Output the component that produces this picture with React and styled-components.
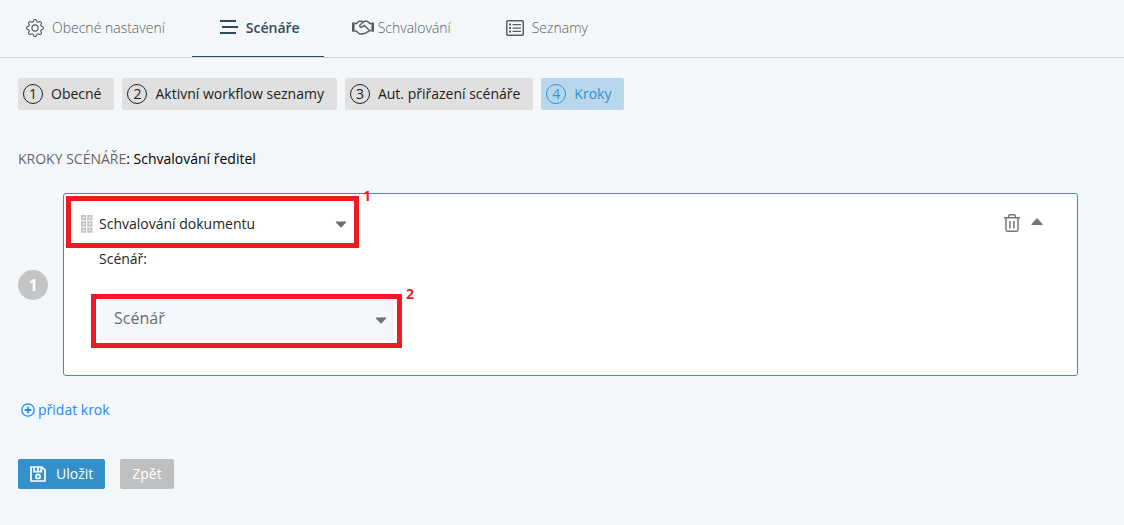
import React, { useState } from 'react';
import styled, { createGlobalStyle } from 'styled-components';
import { BsGear } from 'react-icons/bs';

const GlobalStyle = createGlobalStyle`
  *, *::before, *::after {
    box-sizing: border-box;
  }
  body {
    margin: 0;
    background: #f3f7fa;
    color: #212529;
    font-family: "Open Sans", "Noto Sans", sans-serif;
    font-size: 14px;
    line-height: 20px;
  }
  button, select {
    font: inherit;
  }
`;

// Top navigation
const Tabs = styled.nav`
  display: flex;
  border-bottom: 1px solid #ced4da;
`;

const Tab = styled.a`
  display: flex;
  align-items: center;
  gap: ${({ $gap }) => $gap || 8}px;
  height: 57px;
  padding: 0 ${({ $active }) => ($active ? 24 : 27)}px 0 28px;
  border-bottom: 1px solid ${({ $active }) => ($active ? '#2d4a5e' : 'transparent')};
  color: ${({ $active }) => ($active ? '#2d4a5e' : '#5c5c5c')};
  font-weight: ${({ $active }) => ($active ? 600 : 300)};
  text-decoration: none;
  white-space: nowrap;
  &:first-child {
    padding-left: 26px;
  }
  svg {
    flex: none;
  }
`;

const Content = styled.main`
  padding: 20px 46px 20px 18px;
`;

// Wizard steps
const Steps = styled.div`
  display: flex;
  gap: 8px;
`;

const Step = styled.button`
  display: flex;
  align-items: center;
  gap: 8px;
  height: 32px;
  padding: 0 13px 0 5px;
  border: none;
  border-radius: 2px;
  background: ${({ $active }) => ($active ? '#b9d7ec' : '#e0e0e0')};
  color: ${({ $active }) => ($active ? '#3490cb' : '#212121')};
  white-space: nowrap;
  cursor: pointer;
`;

const StepNumber = styled.span`
  width: 20px;
  height: 20px;
  border: 1px solid currentColor;
  border-radius: 50%;
  line-height: 18px;
  text-align: center;
`;

const Title = styled.h1`
  margin: 39px 0 24px;
  color: #000;
  font-size: 14px;
  font-weight: 500;
  line-height: 20px;
  span {
    color: #666;
    font-weight: 400;
  }
`;

// Scenario step
const StepRow = styled.section`
  display: flex;
  align-items: center;
  gap: 15px;
`;

const Badge = styled.span`
  flex: none;
  width: 30px;
  height: 30px;
  border-radius: 50%;
  background: #c4c4c4;
  color: #fff;
  font-size: 16px;
  font-weight: 700;
  line-height: 30px;
  text-align: center;
`;

const Card = styled.div`
  flex: 1;
  padding: 10px 34px 35px 17px;
  border: 1px solid #3c8dbc;
  border-radius: 3px;
  background: #fff;
`;

const CardHeader = styled.div`
  display: flex;
  align-items: center;
  justify-content: space-between;
  height: 40px;
`;

const TypeField = styled.div`
  position: relative;
  display: flex;
  align-items: center;
  gap: 6px;
  width: 270px;
  height: 40px;
`;

const SelectBox = styled.div`
  position: relative;
  flex: 1;
  display: flex;
  align-items: center;
  > svg {
    position: absolute;
    right: ${({ $filled }) => ($filled ? 6 : 4)}px;
    pointer-events: none;
  }
`;

const Select = styled.select`
  appearance: none;
  width: 100%;
  height: 40px;
  padding: ${({ $filled }) => ($filled ? '0 24px 4px 15px' : '0 24px 0 0')};
  border: none;
  background: ${({ $filled }) => ($filled ? '#f3f7fa' : 'transparent')};
  color: ${({ $filled }) => ($filled ? '#6c6c6c' : '#212529')};
  font-size: ${({ $filled }) => ($filled ? 16 : 14)}px;
  font-weight: ${({ $filled }) => ($filled ? 400 : 500)};
  &:focus {
    outline: none;
  }
`;

const ScenarioField = styled.div`
  position: relative;
  display: flex;
  width: 294px;
  margin: 31px 0 0 18px;
`;

const Label = styled.label`
  display: block;
  margin: 5px 0 0 18px;
  font-weight: 500;
`;

const Actions = styled.div`
  display: flex;
  align-items: center;
  gap: 11px;
  padding-bottom: 3px;
`;

const IconButton = styled.button`
  display: flex;
  padding: 0;
  border: none;
  background: none;
  color: #777;
  cursor: pointer;
`;

// Red frame with a number in its corner
const Callout = styled.div`
  position: absolute;
  inset: ${({ $inset }) => $inset};
  border: 5px solid #ed1c24;
  pointer-events: none;
  span {
    position: absolute;
    left: calc(100% + 9px);
    top: -14px;
    color: #ed1c24;
    font-family: "Noto Sans", sans-serif;
    font-size: 14px;
    font-weight: 700;
    line-height: 18px;
  }
`;

const AddLink = styled.a`
  display: inline-flex;
  align-items: center;
  gap: 3px;
  margin: 24px 0 39px 3px;
  color: #1e88ff;
  text-decoration: none;
`;

const Footer = styled.div`
  display: flex;
  gap: 15px;
`;

const Button = styled.button`
  display: flex;
  align-items: center;
  gap: 10px;
  height: 30px;
  padding: 0 12px;
  border: none;
  border-radius: 2px;
  background: ${({ $primary }) => ($primary ? '#3490cb' : '#bfbfbf')};
  color: #fff;
  cursor: pointer;
`;

function LinesIcon() {
  return (
    <svg width="18" height="18" viewBox="0 0 18 18" fill="currentColor" aria-hidden="true">
      <path d="M0 1h16v2H0zM2 7h16v2H2zM0 13h16v2H0z" />
    </svg>
  );
}

function HandshakeIcon() {
  return (
    <svg width="22" height="16" viewBox="0 0 22 16" fill="none" stroke="currentColor" strokeWidth="1.5" strokeLinejoin="round" aria-hidden="true">
      <path d="M0 2.5h2.6v9.3H0zM19.4 2.5H22v9.3h-2.6z" fill="currentColor" stroke="none" />
      <path d="M2.5 3.4h2L7 1.3h3l1.3.7 1.3-.7h2.6l2.5 2.1h2M2.5 11h1.6l3.6 3h3.1l1.1-.6 1.7-.2 1.4-1.2 1.2-.2 1.2-1.2h2" />
      <path d="M11.3 2 8 5q-.8 1 .2 1.8 1 .7 2 0l2-1.5 4.6 4.5" />
    </svg>
  );
}

function ListIcon() {
  return (
    <svg width="18" height="16" viewBox="0 0 18 16" aria-hidden="true">
      <rect x="0.75" y="0.75" width="16.5" height="14.5" rx="1" fill="none" stroke="currentColor" strokeWidth="1.5" />
      <path d="M3 3.5h2v2H3zM3 7h2v2H3zM3 10.5h2v2H3zM6.5 4H15v1.3H6.5zM6.5 7.4H15v1.3H6.5zM6.5 10.8H15v1.3H6.5z" fill="currentColor" />
    </svg>
  );
}

function GripIcon() {
  return (
    <svg width="12" height="18" viewBox="0 0 12 18" fill="none" stroke="#c2c2c2" strokeWidth="1.8" aria-hidden="true">
      {[0, 6.3, 12.6].map((y) => (
        <React.Fragment key={y}>
          <rect x="0.9" y={y + 0.9} width="3.4" height="3.4" />
          <rect x="7.2" y={y + 0.9} width="3.4" height="3.4" />
        </React.Fragment>
      ))}
    </svg>
  );
}

function Caret() {
  return (
    <svg width="12" height="7" viewBox="0 0 12 7" fill="#6f6f6f" aria-hidden="true">
      <path d="M1.4 0.5h9.2q1 0.2 0.4 1L6.8 6.1q-.8.7-1.6 0L1 1.5q-.6-.8.4-1z" />
    </svg>
  );
}

function CaretUp() {
  return (
    <svg width="12" height="9" viewBox="0 0 12 9" fill="currentColor" aria-hidden="true">
      <path d="M0.8 7Q0 6.6.6 5.9L5.2.7q.8-.7 1.6 0l4.6 5.2q.6.7-.2 1.1z" />
    </svg>
  );
}

function TrashIcon() {
  return (
    <svg width="16" height="18" viewBox="0 0 16 18" fill="none" stroke="currentColor" strokeWidth="1.5" aria-hidden="true">
      <path d="M0 3.8h16M4.7 3.5V2q0-1.2 1.2-1.2h4.2q1.2 0 1.2 1.2v1.5M2 4v11.8q0 1.4 1.4 1.4h9.2q1.4 0 1.4-1.4V4M5.9 7v7.4M9.9 7v7.4" />
    </svg>
  );
}

function PlusIcon() {
  return (
    <svg width="14" height="14" viewBox="0 0 14 14" fill="none" stroke="currentColor" aria-hidden="true">
      <circle cx="7" cy="7" r="6.2" strokeWidth="1.3" />
      <path d="M7 3.7v6.6M3.7 7h6.6" strokeWidth="1.8" />
    </svg>
  );
}

function SaveIcon() {
  return (
    <svg width="16" height="16" viewBox="0 0 16 16" fill="none" stroke="currentColor" strokeWidth="1.7" aria-hidden="true">
      <path d="M1 1h10.8L15 4.2V15H1zM4 1v4.7h7.3V1" />
      <circle cx="8" cy="10.4" r="2.1" />
      <path d="M8 1.5v3" strokeWidth="2" />
    </svg>
  );
}

const steps = ['Obecné', 'Aktivní workflow seznamy', 'Aut. přiřazení scénáře', 'Kroky'];

export default function App() {
  const [activeStep, setActiveStep] = useState(3);

  return (
    <>
      <GlobalStyle />
      <Tabs>
        <Tab href="#obecne"><BsGear size={18} />Obecné nastavení</Tab>
        <Tab href="#scenare" $active><LinesIcon />Scénáře</Tab>
        <Tab href="#schvalovani" $gap={4}><HandshakeIcon />Schvalování</Tab>
        <Tab href="#seznamy"><ListIcon />Seznamy</Tab>
      </Tabs>
      <Content>
        <Steps>
          {steps.map((name, index) => (
            <Step key={name} type="button" $active={index === activeStep} onClick={() => setActiveStep(index)}>
              <StepNumber>{index + 1}</StepNumber>
              {name}
            </Step>
          ))}
        </Steps>

        <Title><span>KROKY SCÉNÁŘE</span>: Schvalování ředitel</Title>

        <StepRow>
          <Badge>1</Badge>
          <Card>
            <CardHeader>
              <TypeField>
                <GripIcon />
                <SelectBox>
                  <Select aria-label="Schvalování dokumentu">
                    <option>Schvalování dokumentu</option>
                  </Select>
                  <Caret />
                </SelectBox>
                <Callout $inset="-8px -8px -4px -15px"><span>1</span></Callout>
              </TypeField>
              <Actions>
                <IconButton type="button" aria-label="Smazat"><TrashIcon /></IconButton>
                <IconButton type="button" aria-label="Sbalit"><CaretUp /></IconButton>
              </Actions>
            </CardHeader>
            <Label htmlFor="scenar">Scénář:</Label>
            <ScenarioField>
              <SelectBox $filled>
                <Select id="scenar" $filled>
                  <option>Scénář</option>
                </Select>
                <Caret />
              </SelectBox>
              <Callout $inset="-6px -9px -8px -8px"><span>2</span></Callout>
            </ScenarioField>
          </Card>
        </StepRow>

        <AddLink href="#pridat"><PlusIcon />přidat krok</AddLink>

        <Footer>
          <Button type="button" $primary><SaveIcon />Uložit</Button>
          <Button type="button">Zpět</Button>
        </Footer>
      </Content>
    </>
  );
}
